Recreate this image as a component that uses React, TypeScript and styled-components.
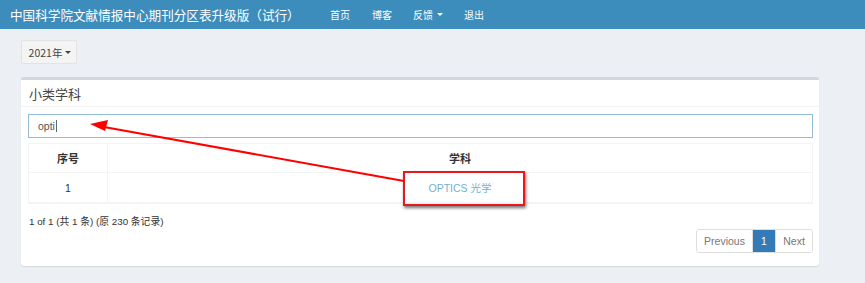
import React from "react";
import styled, { createGlobalStyle } from "styled-components";

const GlobalStyle = createGlobalStyle`
  html, body {
    margin: 0;
    padding: 0;
    background: #ecf0f5;
    font-family: "Source Sans Pro", "Liberation Sans", "Noto Sans CJK SC", sans-serif;
    color: #333;
  }
  * { box-sizing: border-box; }
`;

const Page = styled.div`
  position: relative;
  width: 865px;
  height: 283px;
  overflow: hidden;
`;

const Navbar = styled.div`
  height: 29px;
  background: #3c8dbc;
  display: flex;
  align-items: center;
  padding-left: 10px;
  color: #fff;
  font-family: "Noto Sans CJK SC", sans-serif;
`;

const Brand = styled.div`
  font-size: 12.6px;
  width: 320px;
  white-space: nowrap;
`;

const NavItem = styled.div<{ $w: number }>`
  font-size: 10px;
  width: ${(p) => p.$w}px;
  display: flex;
  align-items: center;
  gap: 4px;
`;

const Caret = styled.span<{ $color?: string }>`
  display: inline-block;
  width: 0;
  height: 0;
  border-left: 3px solid transparent;
  border-right: 3px solid transparent;
  border-top: 3px solid ${(p) => p.$color || "#fff"};
`;

const Content = styled.div`
  padding: 11px 46px 0 21px;
`;

const YearButton = styled.div`
  width: 56px;
  height: 24px;
  display: flex;
  align-items: center;
  justify-content: center;
  gap: 3px;
  padding-left: 2px;
  background: #f4f4f4;
  border: 1px solid #e3e3e3;
  border-radius: 2px;
  font-size: 10.5px;
  font-family: "Noto Sans CJK SC", sans-serif;
  color: #444;
`;

const Box = styled.div`
  margin-top: 13px;
  background: #fff;
  border-top: 3px solid #d2d6de;
  border-radius: 3px;
  box-shadow: 0 1px 1px rgba(0, 0, 0, 0.1);
  padding-bottom: 13px;
`;

const BoxHeader = styled.div`
  height: 27px;
  display: flex;
  align-items: center;
  padding-left: 8px;
  border-bottom: 1px solid #f4f4f4;
  font-size: 13px;
  font-family: "Noto Sans CJK SC", sans-serif;
  color: #444;
`;

const BoxBody = styled.div`
  padding: 7px 6px 0 7px;
`;

const SearchInput = styled.div`
  height: 24px;
  border: 1px solid #93bcd9;
  display: flex;
  align-items: center;
  padding-left: 9px;
  font-size: 10.5px;
  color: #555;
`;

const Cursor = styled.span`
  display: inline-block;
  width: 1px;
  height: 12px;
  background: #666;
  margin-left: 1px;
`;

const Table = styled.div`
  margin-top: 5px;
  border: 1px solid #f4f4f4;
  display: grid;
  grid-template-columns: 79px 1fr;
`;

const Cell = styled.div<{ $head?: boolean; $h: number; $link?: boolean }>`
  height: ${(p) => p.$h}px;
  display: flex;
  align-items: center;
  justify-content: center;
  border-bottom: 1px solid #f4f4f4;
  border-right: 1px solid #f4f4f4;
  font-size: ${(p) => (p.$head ? "11px" : "10.5px")};
  font-weight: ${(p) => (p.$head ? 700 : 400)};
  color: ${(p) => (p.$link ? "#72afd2" : "#333")};
  font-family: "Source Sans Pro", "Liberation Sans", "Noto Sans CJK SC", sans-serif;
  &:nth-child(2n) { border-right: none; }
`;

const Footer = styled.div`
  margin-top: 10px;
  padding-left: 1px;
  font-size: 9.8px;
  color: #333;
  height: 13px;
`;

const PagerRow = styled.div`
  display: flex;
  justify-content: flex-end;
  margin-top: 2px;
`;

const Pager = styled.div`
  display: flex;
  height: 24px;
  border: 1px solid #ddd;
  border-radius: 3px;
  overflow: hidden;
`;

const PageButton = styled.div<{ $active?: boolean; $w: number }>`
  width: ${(p) => p.$w}px;
  display: flex;
  align-items: center;
  justify-content: center;
  font-size: 10.5px;
  background: ${(p) => (p.$active ? "#337ab7" : "#fff")};
  color: ${(p) => (p.$active ? "#fff" : "#777")};
  & + & { border-left: 1px solid #ddd; }
`;

const Overlay = styled.svg`
  position: absolute;
  left: 0;
  top: 0;
  pointer-events: none;
`;

const Highlight = styled.div`
  position: absolute;
  left: 403px;
  top: 171px;
  width: 122px;
  height: 35px;
  border: 2px solid #e8191c;
  box-shadow: 1px 2px 3px rgba(0, 0, 0, 0.55);
`;

export default function App() {
  return (
    <>
      <GlobalStyle />
      <Page>
        <Navbar>
          <Brand>中国科学院文献情报中心期刊分区表升级版（试行）</Brand>
          <NavItem $w={42}>首页</NavItem>
          <NavItem $w={41}>博客</NavItem>
          <NavItem $w={51}>
            反馈 <Caret />
          </NavItem>
          <NavItem $w={40}>退出</NavItem>
        </Navbar>
        <Content>
          <YearButton>
            2021年 <Caret $color="#444" />
          </YearButton>
          <Box>
            <BoxHeader>小类学科</BoxHeader>
            <BoxBody>
              <SearchInput>
                opti
                <Cursor />
              </SearchInput>
              <Table>
                <Cell $head $h={29}>序号</Cell>
                <Cell $head $h={29}>学科</Cell>
                <Cell $h={30}>1</Cell>
                <Cell $h={30} $link>OPTICS 光学</Cell>
              </Table>
              <Footer>1 of 1 (共 1 条) (原 230 条记录)</Footer>
              <PagerRow>
                <Pager>
                  <PageButton $w={55}>Previous</PageButton>
                  <PageButton $w={23} $active>1</PageButton>
                  <PageButton $w={37}>Next</PageButton>
                </Pager>
              </PagerRow>
            </BoxBody>
          </Box>
        </Content>
        <Highlight />
        <Overlay width="865" height="283">
          <line x1="404" y1="181" x2="104" y2="127" stroke="#ff0000" strokeWidth="2.2" />
          <polygon points="90,124 108,120 105,131" fill="#ff0000" />
        </Overlay>
      </Page>
    </>
  );
}
